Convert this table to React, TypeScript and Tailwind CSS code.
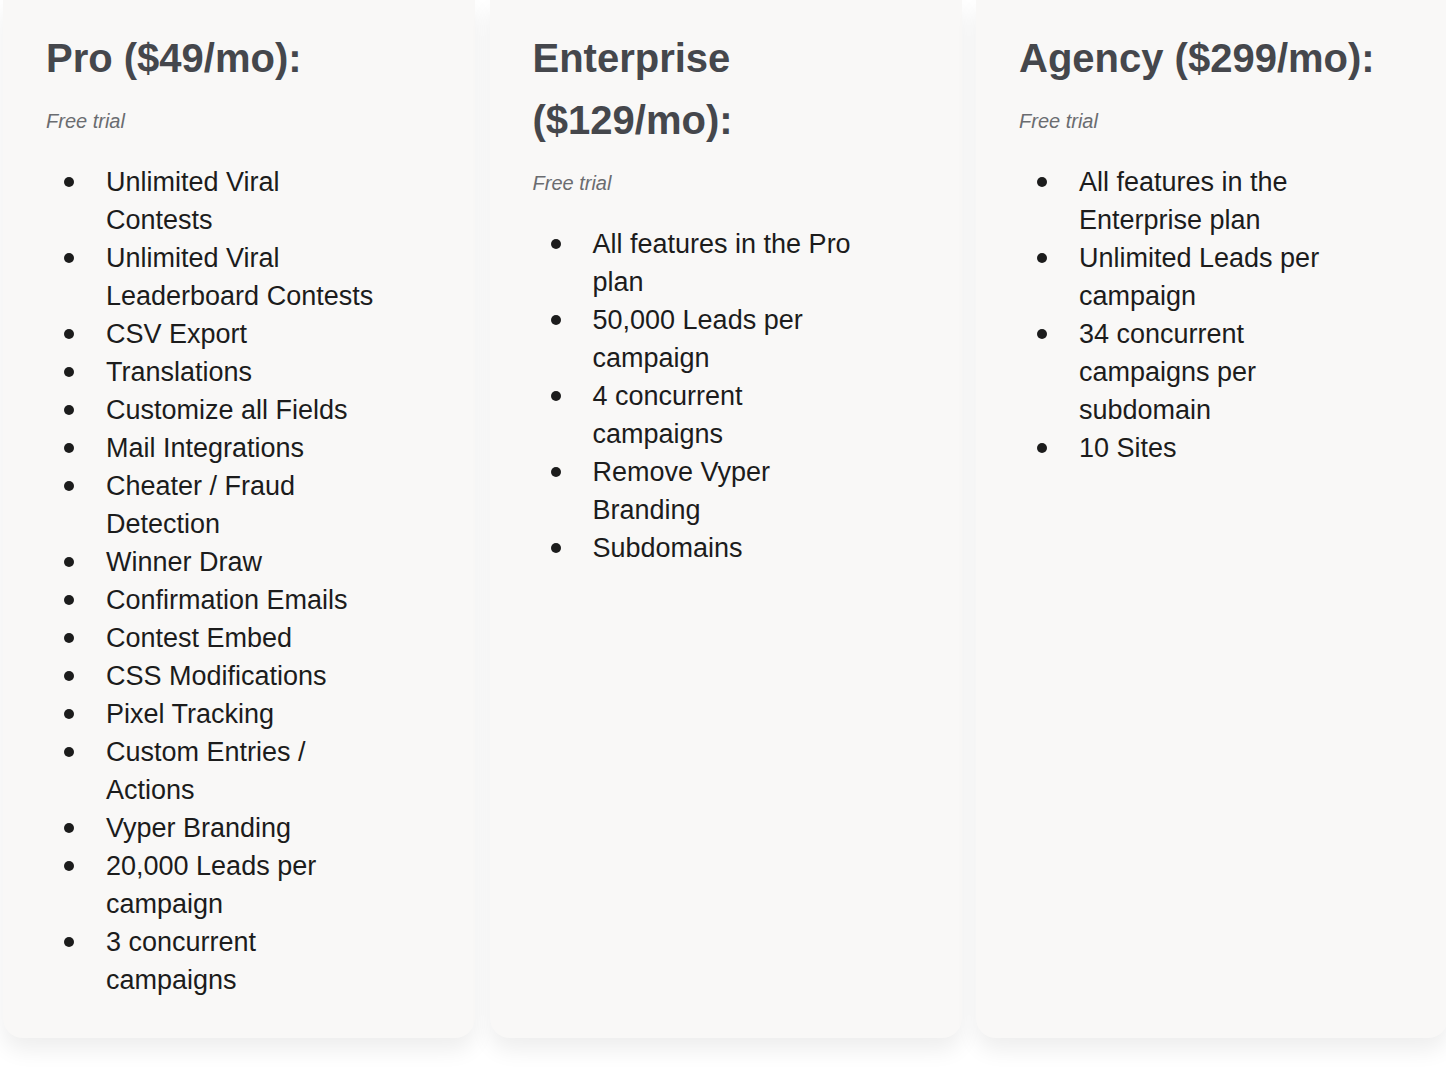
import React from "react";

type Plan = { title: string; items: string[] };

const plans: Plan[] = [
  {
    title: "Pro ($49/mo):",
    items: [
      "Unlimited Viral Contests",
      "Unlimited Viral Leaderboard Contests",
      "CSV Export",
      "Translations",
      "Customize all Fields",
      "Mail Integrations",
      "Cheater / Fraud Detection",
      "Winner Draw",
      "Confirmation Emails",
      "Contest Embed",
      "CSS Modifications",
      "Pixel Tracking",
      "Custom Entries / Actions",
      "Vyper Branding",
      "20,000 Leads per campaign",
      "3 concurrent campaigns",
    ],
  },
  {
    title: "Enterprise ($129/mo):",
    items: [
      "All features in the Pro plan",
      "50,000 Leads per campaign",
      "4 concurrent campaigns",
      "Remove Vyper Branding",
      "Subdomains",
    ],
  },
  {
    title: "Agency ($299/mo):",
    items: [
      "All features in the Enterprise plan",
      "Unlimited Leads per campaign",
      "34 concurrent campaigns per subdomain",
      "10 Sites",
    ],
  },
];

function Card({ plan }: { plan: Plan }) {
  return (
    <div className="w-[472px] shrink-0 bg-[#f9f8f7] rounded-b-[20px] shadow-[0_12px_22px_rgba(0,0,0,0.07)] pl-[43px] pr-[40px] pt-[27px] pb-[39px]">
      <h2 className="text-[40px] leading-[62px] font-bold text-[#45474c]">{plan.title}</h2>
      <p className="mt-[17px] text-[20px] leading-[30px] italic text-[#6a6c70]">Free trial</p>
      <ul className="mt-[27px]">
        {plan.items.map((item) => (
          <li key={item} className="flex">
            <span className="w-[60px] shrink-0 h-[38px] flex items-center pl-[18px]">
              <span className="w-[10px] h-[10px] rounded-full bg-[#1c1c1c]" />
            </span>
            <span className="max-w-[276px] text-[27px] leading-[38px] text-[#1c1c1c]">{item}</span>
          </li>
        ))}
      </ul>
    </div>
  );
}

export default function App() {
  return (
    <div
      className="w-[1446px] min-h-[1070px] bg-white overflow-hidden"
      style={{ fontFamily: '"Liberation Sans", Arial, sans-serif' }}
    >
      <div className="flex items-stretch gap-[14.5px] pl-[3px]">
        {plans.map((p) => (
          <Card key={p.title} plan={p} />
        ))}
      </div>
    </div>
  );
}
